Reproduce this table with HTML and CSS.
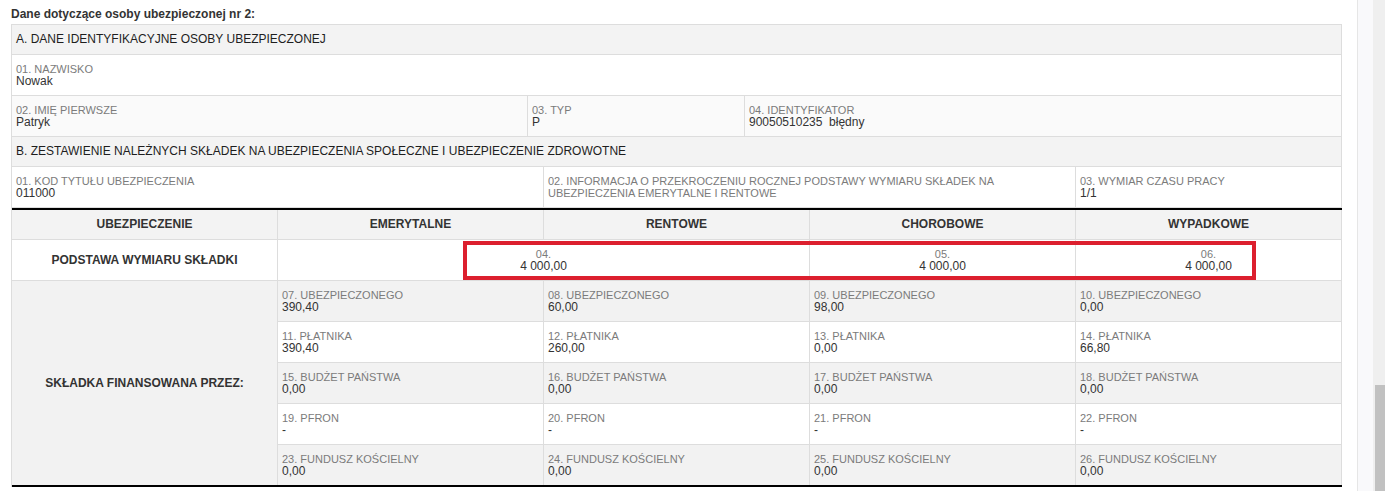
FILE: index.html
```html
<!DOCTYPE html>
<html lang="pl">
<head>
  <meta charset="UTF-8" />
  <meta name="viewport" content="width=device-width, initial-scale=1.0" />
  <title>Dane osoby ubezpieczonej</title>
  <link rel="stylesheet" href="styles.css">
</head>
<body>
  <div class="page">
    <div class="content">
      <h2 class="person-title">Dane dotyczące osoby ubezpieczonej nr 2:</h2>

      <div class="form">
        <div class="section-head">A. DANE IDENTYFIKACYJNE OSOBY UBEZPIECZONEJ</div>
        <div class="row row-single">
          <div class="field"><span class="label">01. NAZWISKO</span><span class="value">Nowak</span></div>
        </div>
        <div class="row row-ident">
          <div class="field"><span class="label">02. IMIĘ PIERWSZE</span><span class="value">Patryk</span></div>
          <div class="field"><span class="label">03. TYP</span><span class="value">P</span></div>
          <div class="field"><span class="label">04. IDENTYFIKATOR</span><span class="value">90050510235&nbsp; błędny</span></div>
        </div>

        <div class="section-head">B. ZESTAWIENIE NALEŻNYCH SKŁADEK NA UBEZPIECZENIA SPOŁECZNE I UBEZPIECZENIE ZDROWOTNE</div>
        <div class="row grid5">
          <div class="field span-2"><span class="label">01. KOD TYTUŁU UBEZPIECZENIA</span><span class="value">011000</span></div>
          <div class="field span-2"><span class="label">02. INFORMACJA O PRZEKROCZENIU ROCZNEJ PODSTAWY WYMIARU SKŁADEK NA UBEZPIECZENIA EMERYTALNE I RENTOWE</span></div>
          <div class="field"><span class="label">03. WYMIAR CZASU PRACY</span><span class="value">1/1</span></div>
        </div>

        <div class="contrib">
          <div class="col-head">UBEZPIECZENIE</div>
          <div class="col-head">EMERYTALNE</div>
          <div class="col-head">RENTOWE</div>
          <div class="col-head">CHOROBOWE</div>
          <div class="col-head">WYPADKOWE</div>

          <div class="row-label">PODSTAWA WYMIARU SKŁADKI</div>
          <div class="field center span-2 marked">
            <span class="label">04.</span><span class="value">4 000,00</span>
            <div class="highlight"></div>
          </div>
          <div class="field center"><span class="label">05.</span><span class="value">4 000,00</span></div>
          <div class="field center"><span class="label">06.</span><span class="value">4 000,00</span></div>

          <div class="row-label tall">SKŁADKA FINANSOWANA PRZEZ:</div>
          <div class="field shade"><span class="label">07. UBEZPIECZONEGO</span><span class="value">390,40</span></div>
          <div class="field shade"><span class="label">08. UBEZPIECZONEGO</span><span class="value">60,00</span></div>
          <div class="field shade"><span class="label">09. UBEZPIECZONEGO</span><span class="value">98,00</span></div>
          <div class="field shade"><span class="label">10. UBEZPIECZONEGO</span><span class="value">0,00</span></div>

          <div class="field"><span class="label">11. PŁATNIKA</span><span class="value">390,40</span></div>
          <div class="field"><span class="label">12. PŁATNIKA</span><span class="value">260,00</span></div>
          <div class="field"><span class="label">13. PŁATNIKA</span><span class="value">0,00</span></div>
          <div class="field"><span class="label">14. PŁATNIKA</span><span class="value">66,80</span></div>

          <div class="field shade"><span class="label">15. BUDŻET PAŃSTWA</span><span class="value">0,00</span></div>
          <div class="field shade"><span class="label">16. BUDŻET PAŃSTWA</span><span class="value">0,00</span></div>
          <div class="field shade"><span class="label">17. BUDŻET PAŃSTWA</span><span class="value">0,00</span></div>
          <div class="field shade"><span class="label">18. BUDŻET PAŃSTWA</span><span class="value">0,00</span></div>

          <div class="field"><span class="label">19. PFRON</span><span class="value">-</span></div>
          <div class="field"><span class="label">20. PFRON</span><span class="value">-</span></div>
          <div class="field"><span class="label">21. PFRON</span><span class="value">-</span></div>
          <div class="field"><span class="label">22. PFRON</span><span class="value">-</span></div>

          <div class="field shade last"><span class="label">23. FUNDUSZ KOŚCIELNY</span><span class="value">0,00</span></div>
          <div class="field shade last"><span class="label">24. FUNDUSZ KOŚCIELNY</span><span class="value">0,00</span></div>
          <div class="field shade last"><span class="label">25. FUNDUSZ KOŚCIELNY</span><span class="value">0,00</span></div>
          <div class="field shade last"><span class="label">26. FUNDUSZ KOŚCIELNY</span><span class="value">0,00</span></div>
        </div>
      </div>
    </div>

    <div class="scrollbar">
      <div class="scroll-track"><div class="scroll-thumb"></div></div>
    </div>
  </div>
</body>
</html>
```

FILE: styles.css
```css
body {
  margin: 0;
  font-family: "Liberation Sans", Arial, sans-serif;
  color: #333;
  background: #fff;
}
.page {
  display: flex;
  height: 491px;
  overflow: hidden;
}
.content {
  flex: 1;
  padding-left: 11px;
}
.person-title {
  margin: 0;
  padding: 7px 0 3px;
  font-size: 12px;
  line-height: 14px;
  font-weight: bold;
  color: #333;
}
.form {
  width: 1331px;
  box-sizing: border-box;
  border-top: 1px solid #ddd;
  border-left: 1px solid #ddd;
}
.section-head {
  height: 29px;
  line-height: 29px;
  padding: 0 4px;
  background: #f3f3f3;
  border-right: 1px solid #ddd;
  border-bottom: 1px solid #ddd;
  font-size: 12px;
  color: #1e1e1e;
}
.row {
  display: grid;
  border-bottom: 1px solid #ddd;
}
.row-single {
  grid-template-columns: 1fr;
}
.row-ident {
  grid-template-columns: 516px 217px 1fr;
  background: #fafafa;
}
.grid5 {
  grid-template-columns: repeat(5, 1fr);
}
.span-2 {
  grid-column: span 2;
}
.field {
  min-height: 25px;
  padding: 8px 4px 7px;
  border-right: 1px solid #ddd;
}
.label {
  display: block;
  font-size: 11px;
  line-height: 12px;
  color: #7b7b7b;
}
.value {
  display: block;
  font-size: 12px;
  line-height: 13px;
  color: #333;
}
.contrib {
  display: grid;
  grid-template-columns: repeat(5, 1fr);
  border-top: 2px solid #000;
  border-bottom: 2px solid #000;
}
.contrib > div {
  border-right: 1px solid #ddd;
  border-bottom: 1px solid #ddd;
}
.contrib > .last {
  border-bottom: 0;
}
.col-head {
  height: 29px;
  line-height: 29px;
  text-align: center;
  font-size: 12px;
  font-weight: bold;
  background: #f3f3f3;
  color: #333;
}
.row-label {
  display: flex;
  align-items: center;
  justify-content: center;
  font-size: 12px;
  font-weight: bold;
  color: #333;
}
.row-label.tall {
  grid-row: span 5;
  background: #f2f2f2;
  border-bottom: 0 !important;
}
.field.shade {
  background: #f2f2f2;
}
.field.center {
  text-align: center;
}
.marked {
  position: relative;
}
.highlight {
  position: absolute;
  left: 185px;
  top: 1px;
  width: 793px;
  height: 39px;
  box-sizing: border-box;
  border: 4px solid #dc1f2e;
  z-index: 1;
}
.scrollbar {
  width: 27px;
  display: flex;
  justify-content: flex-end;
  border-left: 1px solid #e6e6e6;
  background: #f9f9fb;
}
.scroll-track {
  width: 12px;
  display: flex;
  flex-direction: column;
  justify-content: flex-end;
  background: #efefef;
}
.scroll-thumb {
  height: 106px;
  margin-left: 2px;
  background: #c1c1c1;
}
```
